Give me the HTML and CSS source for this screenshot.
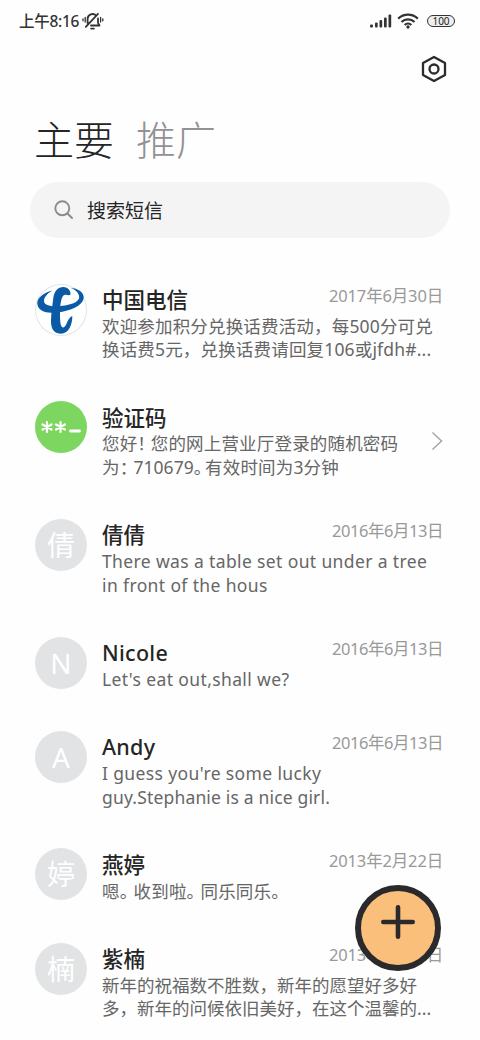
FILE: index.html
```html
<!DOCTYPE html>
<html lang="zh-CN">
<head>
<meta charset="utf-8">
<title>短信</title>
<link rel="stylesheet" href="styles.css">
</head>
<body>
<header class="status">
  <span class="time">上午8:16</span>
  <svg class="mute" width="22" height="18" viewBox="0 0 22 18" fill="none" stroke="#333" stroke-width="1.8" stroke-linecap="round" stroke-linejoin="round">
    <path d="M5.600 11V7a5 5 0 0 1 8.500-3.500M16 6.500v4c0 1.500 1.500 2 1.500 3H9M3.800 14.800L16 1.800"/>
    <path d="M9 16.600h3" stroke-width="1.600"/><path d="M3.200 5.500v4.500M1 6.800v2M18.600 5.500v4.500M20.800 6.800v2" stroke-width="1.300"/>
  </svg>
  <svg class="signal" width="22" height="14" viewBox="0 0 22 14" fill="#333"><rect x="0" y="10.500" width="3" height="3" rx="1"/><rect x="5" y="8.500" width="2.700" height="5" rx="1"/><rect x="9.500" y="6" width="2.700" height="7.500" rx="1"/><rect x="14" y="3.500" width="2.700" height="10" rx="1"/><rect x="18.500" y="0.500" width="2.700" height="13" rx="1"/></svg>
  <svg class="wifi" width="22" height="16" viewBox="0 0 22 16" fill="none" stroke="#333" stroke-width="2.200"><path d="M1.200 5.600a14 14 0 0 1 19.600 0M4.500 9a9.300 9.300 0 0 1 13 0M7.600 12a5 5 0 0 1 6.800 0"/><circle cx="11" cy="14" r="1.700" fill="#333" stroke="none"/></svg>
  <span class="battery">100</span>
</header>
<div class="toolbar">
  <svg width="28" height="28" viewBox="0 0 28 28" fill="none" stroke="#2b2b2b" stroke-width="2.300" stroke-linejoin="round"><path d="M14 2l11 6v12l-11 6-11-6V8z"/><circle cx="14" cy="14" r="4.500"/></svg>
</div>
<nav class="tabs"><span class="tab active">主要</span><span class="tab">推广</span></nav>
<div class="search">
  <svg width="20" height="20" viewBox="0 0 20 20" fill="none" stroke="#8c8c8c" stroke-width="1.900" stroke-linecap="round"><circle cx="8.300" cy="8.300" r="7"/><path d="M13.500 13.500l4.500 4.500"/></svg>
  <span>搜索短信</span>
</div>
<main class="list">
  <article class="item">
    <div class="avatar telecom"><svg width="52" height="52" viewBox="0 0 52 52" fill="#0b5aa6"><path d="M17.300 6.500C8 9 2 14 2.300 19.500C2.800 26 9 28.700 16 28.700C28 28.700 38 25.500 43.500 21.500C47 19 48.900 16 48.700 13C48.300 8 43 4.500 35.500 3.700C40 5.500 44 8.500 44.200 13C44.200 17 39 20 30 21.400C20 23 9 22.500 9 17C9 13 12.500 9.500 17.300 6.500Z"/><path d="M18.300 13.700C19.500 6.500 23 3 28.500 3C32 3 36 6 35.500 10.500C34 12 32 10.500 30 10.800C26.500 11.500 25.300 18 25 28.700C25 38 25.500 43.500 28.300 43.500C31.500 43.500 32 34 37.300 32C37.500 40 34 50 25.500 49.700C18 49 16 44 16 37C16 30 17.300 23 18.300 13.700Z"/></svg></div>
    <div class="text"><div class="head"><h2>中国电信</h2><time>2017年6月30日</time></div>
    <p><span class="l1">欢迎参加积分兑换话费活动，每500分可兑</span><span class="l1">换话费5元，兑换话费请回复106或jfdh#...</span></p></div>
  </article>
  <article class="item">
    <div class="avatar code"><svg width="52" height="52" viewBox="0 0 52 52" stroke="#fff" stroke-width="2.200" stroke-linecap="round"><path d="M12 21v10M7.500 23.500l9 5M16.500 23.500l-9 5M25.500 21v10M21 23.500l9 5M30 23.500l-9 5"/><path d="M35.500 30h9" stroke-width="2.800"/></svg></div>
    <div class="text"><div class="head"><h2>验证码</h2></div>
    <p><span class="l1">您好<i class="mark bang">！</i>您的网上营业厅登录的随机密码</span><span class="l1">为<i class="mark colon">：</i><i class="digits">710679</i><i class="mark">。</i>有效时间为3分钟</span></p></div>
    <svg class="chevron" width="12" height="20" viewBox="0 0 12 20" fill="none" stroke="#a6a6a6" stroke-width="1.500"><path d="M1.500 1.500L10.500 10L1.500 18.500"/></svg>
  </article>
  <article class="item">
    <div class="avatar">倩</div>
    <div class="text"><div class="head"><h2>倩倩</h2><time class="narrow">2016年6月13日</time></div>
    <p><span class="l2">There was a table set out under a tree</span><span class="l2">in front of the hous</span></p></div>
  </article>
  <article class="item">
    <div class="avatar">N</div>
    <div class="text"><div class="head"><h2 class="latin">Nicole</h2><time class="narrow">2016年6月13日</time></div>
    <p><span class="l2">Let's eat out,shall we?</span></p></div>
  </article>
  <article class="item">
    <div class="avatar">A</div>
    <div class="text"><div class="head"><h2 class="latin">Andy</h2><time class="narrow">2016年6月13日</time></div>
    <p><span class="l2">I guess you're some lucky</span><span class="l1">guy.Stephanie is a nice girl.</span></p></div>
  </article>
  <article class="item">
    <div class="avatar">婷</div>
    <div class="text"><div class="head"><h2>燕婷</h2><time>2013年2月22日</time></div>
    <p><span class="l1">嗯<i class="mark stop">。</i>收到啦<i class="mark stop">。</i>同乐同乐<i class="mark">。</i></span></p></div>
  </article>
  <article class="item">
    <div class="avatar">楠</div>
    <div class="text"><div class="head"><h2>紫楠</h2><time>2013年2月22日</time></div>
    <p><span>新年的祝福数不胜数，新年的愿望好多好</span><span>多，新年的问候依旧美好，在这个温馨的...</span></p></div>
  </article>
</main>
<button class="fab" aria-label="新建"><svg width="36" height="36" viewBox="0 0 36 36" stroke="#2a2a2c" stroke-width="4.600" stroke-linecap="round"><path d="M18 3.300v29.400M3.300 18h29.400"/></svg></button>
</body>
</html>
```
FILE: styles.css
```css
* { box-sizing: border-box; }
body {
  margin: 0;
  width: 480px;
  height: 1040px;
  overflow: hidden;
  position: relative;
  background: #fefefe;
  font-family: "Noto Sans", "Noto Sans CJK SC", sans-serif;
  color: #252525;
}
.status { display: flex; align-items: center; height: 42px; padding: 0 25px 0 19px; }
.time { font-size: 15.500px; font-weight: 500; line-height: 42px; letter-spacing: -0.300px; color: #333; white-space: nowrap; }
.mute { margin-left: 3px; }
.signal { margin-left: auto; }
.wifi { margin: 0 8px 0 5px; }
.battery {
  width: 28px; height: 12px; border: 1.500px solid #333; border-radius: 6px;
  background: #eee; font-size: 10px; line-height: 11px; text-align: center; color: #222;
}
.toolbar { display: flex; justify-content: flex-end; height: 58px; padding: 13px 32px 0 0; }
.tabs { display: flex; gap: 22px; height: 82px; padding-left: 34px; font-family: "Noto Sans CJK SC", sans-serif; font-size: 40px; line-height: 76px; font-weight: 300; }
.tab { color: #929292; }
.tab.active { color: #252525; }
.search {
  display: flex; align-items: center; gap: 13px; height: 56px; margin: 0 30px; padding-left: 24px;
  border-radius: 28px; background: #f4f4f4; font-size: 19px; color: #252525;
}
.list { padding: 48px 37px 0 35px; }
.item { display: flex; gap: 15px; position: relative; padding-bottom: 42.100px; }
.avatar {
  flex: none; width: 52px; height: 52px; margin: -2.500px 0 -10px; border-radius: 50%;
  background: #e1e3e5; color: #fff; font-size: 28px; line-height: 52px; text-align: center;
}
.avatar.telecom { background: #fff; box-shadow: inset 0 0 0 1px #e2e4e6; }
.avatar.code { background: #7dd65f; }
.text { flex: 1; min-width: 0; }
.head { display: flex; justify-content: space-between; height: 28.800px; }
h2 { margin: 0; font-size: 21.500px; line-height: 28px; font-weight: 500; white-space: nowrap; }
h2.latin { letter-spacing: 0.280px; }
time { font-size: 16.500px; line-height: 20.500px; letter-spacing: -0.160px; color: #999; white-space: nowrap; }
time.narrow { letter-spacing: -0.460px; }
p { margin: 0 0 -0.300px; font-size: 17.500px; line-height: 23.550px; color: #666; }
p span { display: block; height: 23.550px; white-space: nowrap; }
.l1 { letter-spacing: 0.170px; }
.l2 { letter-spacing: 0.370px; }
.mark { margin-right: 2.500px; font-style: normal; font-feature-settings: "halt"; }
.bang { margin-right: 4.500px; }
.stop { margin-right: 5px; }
.colon { margin-right: 5px; }
.digits { font-style: normal; letter-spacing: 0; }
.chevron { position: absolute; right: 0; top: 27px; }
.fab {
  position: absolute; left: 355px; top: 885px; width: 86px; height: 86px; padding: 0 0 12px;
  display: flex; align-items: center; justify-content: center;
  border: 6.500px solid #2a2a2c; border-radius: 50%; background: #fbbf7c;
}
```
